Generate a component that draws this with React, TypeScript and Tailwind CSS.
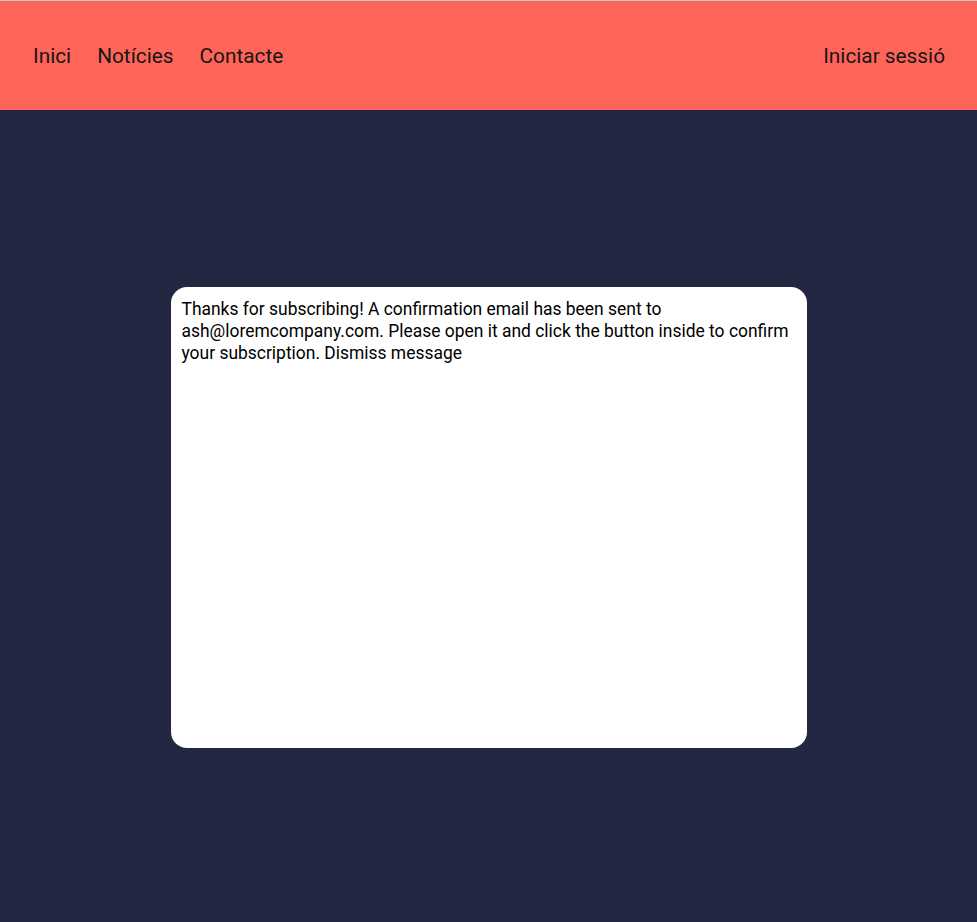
export default function App() {
  return (
    <div className="min-h-[922px] bg-[#232742] font-['Roboto',sans-serif]">
      {/* Header */}
      <header className="h-[110px] border-t border-[#c8c8c8] bg-[#ff6459] px-[33px] pt-[2px] flex items-center justify-between text-[20.8px] text-[#161616]">
        <nav className="flex items-center gap-[26px]">
          <a href="#">Inici</a>
          <a href="#">Notícies</a>
          <a href="#">Contacte</a>
        </nav>
        <a href="#" className="mr-[-1px]">Iniciar sessió</a>
      </header>

      {/* Message */}
      <main className="flex justify-center pt-[177px]">
        <div className="w-[636px] h-[461px] bg-white rounded-[16px] px-[11px] py-[11px] text-[17.45px] leading-[22px] text-black">
          Thanks for subscribing! A confirmation email has been sent to ash@loremcompany.com. Please open it and click the button inside to confirm your subscription. Dismiss message
        </div>
      </main>
    </div>
  );
}
